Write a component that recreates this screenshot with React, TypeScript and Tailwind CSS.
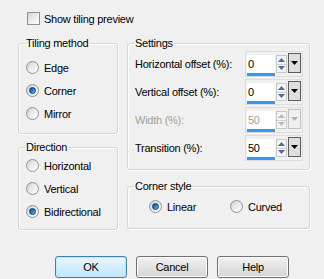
import React from 'react';

function Radio({ checked, label, disabled }: { checked?: boolean; label: string; disabled?: boolean }) {
  return (
    <div className="flex items-center h-[23px]">
      <span className="relative w-[13px] h-[13px] rounded-full border border-[#8f9090] bg-gradient-to-br from-[#cfcfcf] via-[#ececec] to-[#ffffff] flex items-center justify-center shrink-0">
        {checked && (
          <span className="w-[7px] h-[7px] rounded-full bg-gradient-to-br from-[#0c4f8f] via-[#1f7fcf] to-[#6fd0ff] border border-[#083b6b]" />
        )}
      </span>
      <span className={`ml-[5px] ${disabled ? 'text-[#a0a0a0]' : 'text-black'}`}>{label}</span>
    </div>
  );
}

function Group({ title, className, children }: { title: string; className?: string; children: React.ReactNode }) {
  return (
    <fieldset className={`border border-[#d5d5d5] rounded-[3px] shadow-[inset_1px_1px_0_#ffffff,1px_1px_0_#ffffff] p-0 ${className ?? ''}`}>
      <legend className="ml-[6px] px-[1px] leading-[14px]">{title}</legend>
      {children}
    </fieldset>
  );
}

function SpinField({ label, value, disabled }: { label: string; value: string; disabled?: boolean }) {
  const arrow = disabled ? '#b8b8b8' : '#4e6b9b';
  return (
    <div className="flex items-center h-[26px]">
      <span className={`w-[110px] whitespace-nowrap ${disabled ? 'text-[#a0a0a0]' : 'text-black'}`}>{label}</span>
      <div className="border border-[#dcdcdc] px-[1px] pt-[1px] w-[58px] h-[26px] flex flex-col">
        <div className="flex h-[20px]">
          <div className={`w-[29px] mt-[2px] h-[18px] bg-white flex items-center pl-[1px] ${disabled ? 'text-[#a0a0a0] bg-[#f4f4f4]' : 'text-black'}`}>{value}</div>
          <div className="w-[11px] mt-[2px] h-[18px] ml-[1px] border border-[#c8c8c8] bg-[#f4f4f4] flex flex-col">
            <div className="flex-1 flex items-center justify-center border-b border-[#d0d0d0]">
              <svg width="7" height="4" viewBox="0 0 7 4"><path d="M0 4 L3.5 0 L7 4 Z" fill={arrow} /></svg>
            </div>
            <div className="flex-1 flex items-center justify-center">
              <svg width="7" height="4" viewBox="0 0 7 4"><path d="M0 0 L3.5 4 L7 0 Z" fill={arrow} /></svg>
            </div>
          </div>
          <div className={`w-[13px] h-[20px] ml-[1px] border ${disabled ? 'border-[#c0c0c0] bg-[#f0f0f0]' : 'border-[#5a5a5a] bg-[#dedede]'} flex items-center justify-center`}>
            <svg width="7" height="4" viewBox="0 0 7 4"><path d="M0 0 L3.5 4 L7 0 Z" fill={disabled ? '#b0b0b0' : '#000000'} /></svg>
          </div>
        </div>
        <div className="w-[28px] h-[4px] bg-[#3399ee]" />
      </div>
    </div>
  );
}

function Button({ label, focused }: { label: string; focused?: boolean }) {
  return (
    <button
      className={`w-[72px] h-[22px] rounded-[3px] border ${
        focused
          ? 'border-[#3c7fb1] bg-gradient-to-b from-[#eaf6fd] to-[#bee6fd] shadow-[inset_0_0_0_1px_#bfe9fb]'
          : 'border-[#707070] bg-gradient-to-b from-[#f2f2f2] to-[#d4d4d4] shadow-[inset_0_0_0_1px_#fbfbfb]'
      } text-black flex items-center justify-center`}
    >
      {label}
    </button>
  );
}

export default function App() {
  return (
    <div className="w-[324px] h-[279px] bg-[#f0f0f0] text-[11px] tracking-[-0.25px] leading-[14px] text-black overflow-hidden font-['Liberation_Sans',Arial,sans-serif]">
      <div className="flex items-center pt-[12px] pl-[27px] h-[25px]">
        <span className="w-[13px] h-[13px] border border-[#8f9090] bg-gradient-to-br from-[#d2d2d2] via-[#ececec] to-[#ffffff] shrink-0" />
        <span className="ml-[4px]">Show tiling preview</span>
      </div>

      <div className="flex mt-[11px] pl-[18px] gap-[9px]">
        <div className="flex flex-col w-[100px]">
          <Group title="Tiling method">
            <div className="pl-[7px] pt-[6px] pb-[8px]">
              <Radio label="Edge" />
              <Radio label="Corner" checked />
              <Radio label="Mirror" />
            </div>
          </Group>
          <Group title="Direction" className="mt-[6px]">
            <div className="pl-[7px] pb-[6px]">
              <Radio label="Horizontal" />
              <Radio label="Vertical" />
              <Radio label="Bidirectional" checked />
            </div>
          </Group>
        </div>

        <div className="flex flex-col w-[183px]">
          <Group title="Settings">
            <div className="flex flex-col gap-[2px] pl-[7px] pt-[1px] pb-[8px]">
              <SpinField label="Horizontal offset (%):" value="0" />
              <SpinField label="Vertical offset (%):" value="0" />
              <SpinField label="Width (%):" value="50" disabled />
              <SpinField label="Transition (%):" value="50" />
            </div>
          </Group>
          <Group title="Corner style" className="mt-[9px]">
            <div className="flex pl-[21px] pt-[2px] pb-[10px]">
              <div className="w-[81px]">
                <Radio label="Linear" checked />
              </div>
              <Radio label="Curved" />
            </div>
          </Group>
        </div>
      </div>

      <div className="flex mt-[26px] pl-[55px] gap-[9px]">
        <Button label="OK" focused />
        <Button label="Cancel" />
        <Button label="Help" />
      </div>
    </div>
  );
}
